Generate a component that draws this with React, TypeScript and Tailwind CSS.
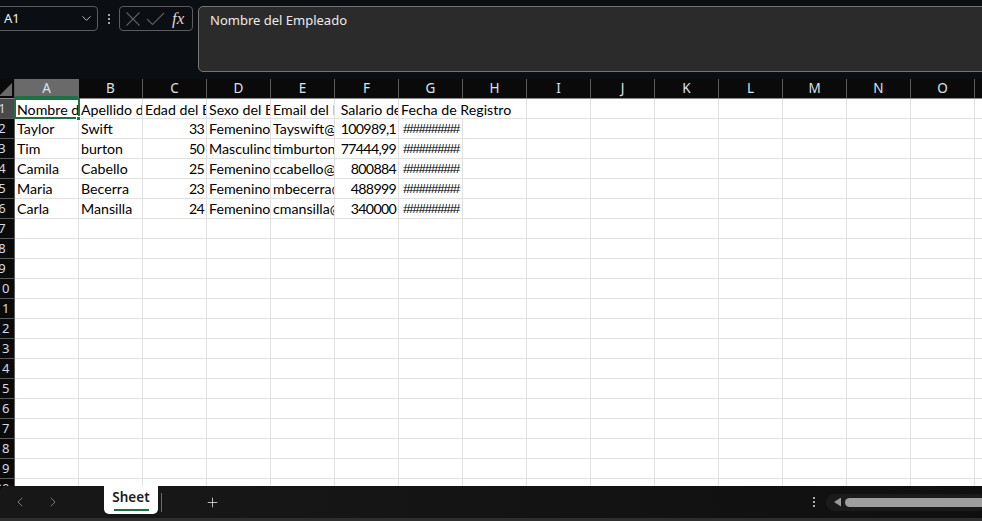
import { ChevronDown, ChevronLeft, ChevronRight, Plus } from 'lucide-react'

const COLS = ['A', 'B', 'C', 'D', 'E', 'F', 'G', 'H', 'I', 'J', 'K', 'L', 'M', 'N', 'O', 'P']

type Cell = { v: string; right?: boolean; hash?: boolean }

const H: Cell = { v: '#########', hash: true }

const DATA: Cell[][] = [
  [
    { v: 'Nombre del Empleado' },
    { v: 'Apellido del Empleado' },
    { v: 'Edad del Empleado' },
    { v: 'Sexo del Empleado' },
    { v: 'Email del Empleado' },
    { v: ' Salario del Empleado' },
  ],
  [
    { v: 'Taylor' }, { v: 'Swift' }, { v: '33', right: true }, { v: 'Femenino' },
    { v: 'Tayswift@gmail.com' }, { v: '100989,1', right: true }, H,
  ],
  [
    { v: 'Tim' }, { v: 'burton' }, { v: '50', right: true }, { v: 'Masculino' },
    { v: 'timburton@gmail.com' }, { v: '77444,99', right: true }, H,
  ],
  [
    { v: 'Camila' }, { v: 'Cabello' }, { v: '25', right: true }, { v: 'Femenino' },
    { v: 'ccabello@gmail.com' }, { v: '800884', right: true }, H,
  ],
  [
    { v: 'Maria' }, { v: 'Becerra' }, { v: '23', right: true }, { v: 'Femenino' },
    { v: 'mbecerra@gmail.com' }, { v: '488999', right: true }, H,
  ],
  [
    { v: 'Carla' }, { v: 'Mansilla' }, { v: '24', right: true }, { v: 'Femenino' },
    { v: 'cmansilla@gmail.com' }, { v: '340000', right: true }, H,
  ],
]

const ROWS = Array.from({ length: 20 }, (_, i) => i + 1)

const cellFont = { fontFamily: 'Lato, "Liberation Sans", sans-serif' }
const hashFont = { fontFamily: '"Liberation Sans", sans-serif' }

function Row({ n }: { n: number }) {
  const data = DATA[n - 1] || []
  return (
    <div className="flex h-[20px] shrink-0">
      <div
        className={`w-[25px] ml-[-10px] shrink-0 flex items-center justify-center border-r border-b border-[#5a5a5a] text-[13px] text-[#d4dbe6] ${
          n === 1 ? 'bg-[#4a4a4a]' : 'bg-[#0a0a0a]'
        }`}
        style={{ fontFamily: '"Noto Sans", sans-serif' }}
      >
        {n}
      </div>
      {n === 1 ? (
        <>
          {data.map((c, i) => (
            <div
              key={i}
              className="w-[64px] shrink-0 border-r border-b border-[#e1e1e1] overflow-hidden whitespace-pre px-[2px] pt-[1px] text-[14.2px] leading-[19px] text-black"
              style={cellFont}
            >
              {c.v}
            </div>
          ))}
          <div
            className="w-[128px] shrink-0 border-r border-b border-[#e1e1e1] overflow-hidden whitespace-nowrap px-[2px] pt-[1px] text-[14.2px] leading-[19px] text-black"
            style={cellFont}
          >
            Fecha de Registro
          </div>
          {COLS.slice(8).map(c => (
            <div key={c} className="w-[64px] shrink-0 border-r border-b border-[#e1e1e1]" />
          ))}
        </>
      ) : (
        COLS.map((c, i) => {
          const cell = data[i]
          return (
            <div
              key={c}
              className={`w-[64px] shrink-0 border-r border-b border-[#e1e1e1] overflow-hidden whitespace-nowrap pt-[1px] leading-[18px] text-black ${
                cell?.right ? 'text-right pr-[2px] pl-[2px] tracking-[-0.7px]' : 'px-[2px]'
              } ${cell?.hash ? 'text-[13.5px] tracking-[-1.3px] pl-[4px]' : 'text-[14.2px]'}`}
              style={cell?.hash ? hashFont : cellFont}
            >
              {cell?.v}
            </div>
          )
        })
      )}
    </div>
  )
}

export default function App() {
  return (
    <div className="w-[982px] h-[521px] overflow-hidden bg-[#0b0e12] flex flex-col">
      {/* Barra de fórmulas */}
      <div className="h-[79px] shrink-0 flex items-start pt-[6px]" style={{ fontFamily: '"Noto Sans", sans-serif' }}>
        <div className="ml-[-4px] w-[102px] h-[25px] border border-[#5c5c5c] rounded-[4px] flex items-center justify-between pl-[7px] pr-[3px]">
          <span className="text-[13px] text-[#f0f0f0]">A1</span>
          <ChevronDown size={15} className="text-[#c8c8c8]" strokeWidth={1.5} />
        </div>
        <div className="w-[21px] h-[25px] flex flex-col items-center justify-center gap-[2px]">
          <span className="w-[2px] h-[2px] bg-[#d8d8d8] rounded-full" />
          <span className="w-[2px] h-[2px] bg-[#d8d8d8] rounded-full" />
          <span className="w-[2px] h-[2px] bg-[#d8d8d8] rounded-full" />
        </div>
        <div className="w-[74px] h-[25px] border border-[#5c5c5c] rounded-[4px] flex items-center pl-[5px]">
          <svg width="16" height="16" viewBox="0 0 16 16" className="text-[#5e5e5e]">
            <path d="M1.5 1.5 14.5 14.5M14.5 1.5 1.5 14.5" stroke="currentColor" strokeWidth="1.1" fill="none" />
          </svg>
          <svg width="19" height="14" viewBox="0 0 19 14" className="ml-[5px] text-[#5e5e5e]">
            <path d="M1 7 6.5 12.5 18 1" stroke="currentColor" strokeWidth="1.1" fill="none" />
          </svg>
          <span className="ml-[7px] text-[17px] italic text-[#d6d6d6] leading-none" style={{ fontFamily: '"Liberation Serif", serif' }}>
            fx
          </span>
        </div>
        <div className="ml-[5px] flex-1 mr-[-10px] h-[66px] bg-[#2b2b2b] border border-[#747474] rounded-[5px] pl-[11px]">
          <span className="text-[13px] leading-[24px] text-[#ececec]">Nombre del Empleado</span>
        </div>
      </div>

      {/* Hoja */}
      <div className="flex-1 overflow-hidden bg-white flex flex-col">
        <div className="flex h-[20px] shrink-0 bg-[#0a0a0a] border-b border-[#8a8a8a]" style={{ fontFamily: '"Noto Sans", sans-serif' }}>
          <div className="w-[25px] ml-[-10px] shrink-0 border-r border-[#5a5a5a] relative">
            <div
              className="absolute right-[2px] bottom-[2px] w-[13px] h-[13px] bg-[#6a6a6a]"
              style={{ clipPath: 'polygon(100% 0, 100% 100%, 0 100%)' }}
            />
          </div>
          {COLS.map(c => (
            <div
              key={c}
              className={`w-[64px] shrink-0 flex items-center justify-center text-[13.5px] text-[#dde3ea] ${
                c === 'A' ? 'bg-[#6a6a6a] border-r border-[#6a6a6a] shadow-[inset_0_-2px_0_#1e7145]' : 'border-r border-[#5a5a5a]'
              }`}
            >
              {c}
            </div>
          ))}
        </div>
        <div className="relative">
          {ROWS.map(n => (
            <Row key={n} n={n} />
          ))}
          {/* Celda activa A1 */}
          <div className="absolute left-[14px] top-[-1px] w-[66px] h-[21px] border-2 border-[#1e7145]" />
          <div className="absolute left-[76px] top-[17px] w-[5px] h-[5px] bg-[#1e7145] border border-white" />
        </div>
      </div>

      {/* Pestañas */}
      <div className="h-[35px] shrink-0 flex bg-white" style={{ fontFamily: '"Noto Sans", sans-serif' }}>
        <div className="flex-1 flex bg-[#0b0b0b] border-b-[3px] border-[#2e2e2e]">
          <div className="w-[104px] shrink-0 bg-[#171717] rounded-tl-[6px] flex items-center pl-[12px] gap-[17px]">
            <ChevronLeft size={16} className="text-[#7a7a7a]" strokeWidth={1.5} />
            <ChevronRight size={16} className="text-[#7a7a7a]" strokeWidth={1.5} />
          </div>
          <div className="w-[54px] shrink-0 bg-[#171717]">
            <div className="w-[54px] h-[28px] bg-white rounded-b-[5px] flex flex-col items-center justify-center">
              <span className="text-[13.5px] font-semibold text-[#1b1b1b] leading-[17px]">Sheet</span>
              <span className="w-[35px] h-[2px] bg-[#1e7145] mt-[3px]" />
            </div>
          </div>
          <div className="flex-1 flex items-center bg-gradient-to-r from-[#171717] to-[#0f0f0f]">
            <div className="ml-[3px] w-[1px] h-[19px] bg-[#6a6a6a]" />
            <Plus size={15} className="ml-[43px] text-[#e0e0e0]" strokeWidth={1.3} />
            <div className="ml-auto mr-[11px] flex flex-col gap-[2px]">
              <span className="w-[2px] h-[2px] bg-[#e0e0e0] rounded-full" />
              <span className="w-[2px] h-[2px] bg-[#e0e0e0] rounded-full" />
              <span className="w-[2px] h-[2px] bg-[#e0e0e0] rounded-full" />
            </div>
            <div className="w-[160px] mr-[-4px] h-[17px] rounded-full bg-[#1b1b1b] flex items-center pl-[8px] gap-[4px]">
              <span
                className="w-[7px] h-[9px] bg-[#9a9a9a]"
                style={{ clipPath: 'polygon(0 50%, 100% 0, 100% 100%)' }}
              />
              <span className="flex-1 h-[9px] rounded-full bg-[#9e9e9e]" />
            </div>
          </div>
        </div>
      </div>
    </div>
  )
}
